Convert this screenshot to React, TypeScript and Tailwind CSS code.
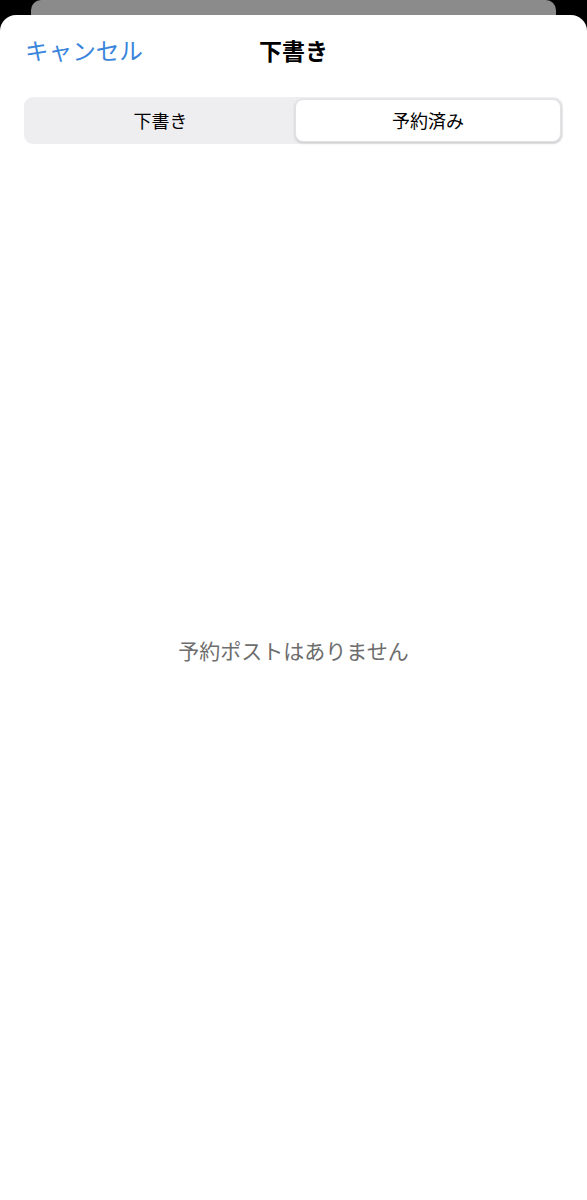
import React from "react";

const jp = { fontFamily: '"Noto Sans CJK JP", "Noto Sans", sans-serif' };

export default function App() {
  return (
    <div className="w-[587px] h-[1200px] bg-black flex flex-col overflow-hidden" style={jp}>
      <div className="mx-[31px] h-[15px] shrink-0 bg-[#8b8b8b] rounded-t-[10px]" />
      <div className="flex-1 bg-white rounded-t-[16px] flex flex-col">
        <div className="h-[70px] grid grid-cols-[1fr_auto_1fr] items-center px-[25px]">
          <span className="text-[23.6px] leading-[30px] text-[#3a85dc] justify-self-start">キャンセル</span>
          <span className="text-[23px] leading-[30px] font-semibold text-black">下書き</span>
          <span />
        </div>
        <div className="mt-[12px] mx-[24px] h-[47px] rounded-[9px] bg-[#eeeef0] p-[2px] flex">
          <div className="flex-1 flex items-center justify-center text-[18px] text-black">下書き</div>
          <div className="w-[266px] flex items-center justify-center text-[18px] text-black bg-white rounded-[8px] shadow-[0_1px_3px_rgba(0,0,0,0.18)] border border-[#e2e2e4]">予約済み</div>
        </div>
        <div className="mt-[491px] text-center text-[21px] leading-[30px] text-[#6d6d6d]">予約ポストはありません</div>
      </div>
    </div>
  );
}
